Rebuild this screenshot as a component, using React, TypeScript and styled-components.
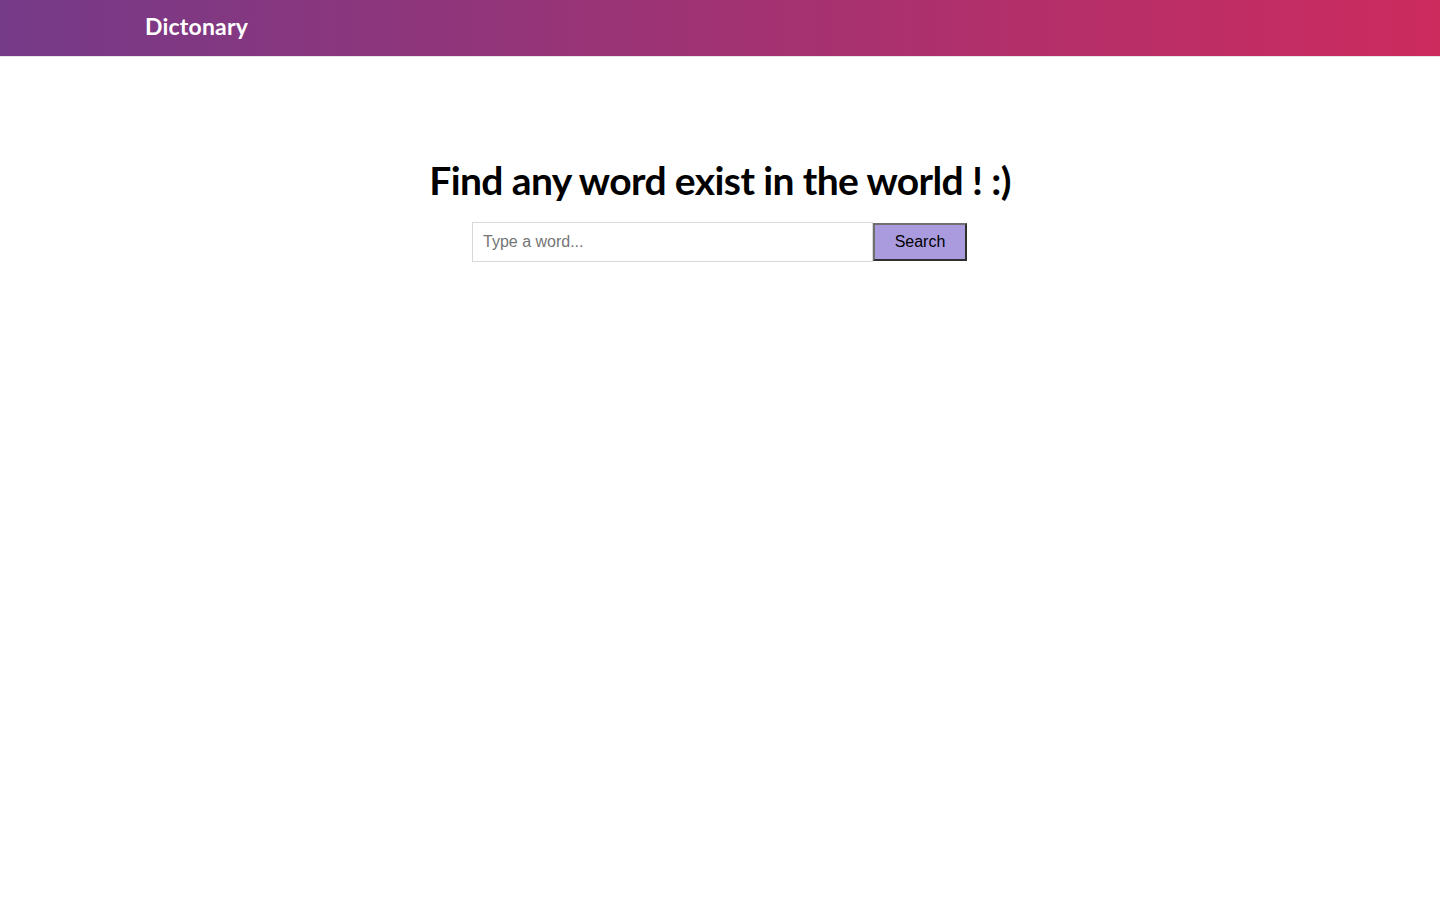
import React from "react";
import styled, { createGlobalStyle } from "styled-components";

const Global = createGlobalStyle`
  html, body { margin: 0; padding: 0; background: #fff; }
  body { font-family: "Liberation Sans", Arial, sans-serif; }
`;

const Header = styled.header`
  height: 57px;
  background: linear-gradient(to right, #753a88, #cc2b5e);
  border-bottom: 1px solid #e6e6e6;
  box-sizing: border-box;
  display: flex;
  align-items: center;
  padding-left: 145px;
`;

const Logo = styled.h1`
  margin: 0;
  color: #fff;
  font-family: Lato, sans-serif;
  font-weight: 700;
  font-size: 23px;
  letter-spacing: 0.2px;
  line-height: 1;
  padding-bottom: 3px;
`;

const Main = styled.main`
  display: flex;
  flex-direction: column;
  align-items: center;
  padding-top: 99px;
`;

const Title = styled.h2`
  margin: 0;
  font-family: Lato, sans-serif;
  font-weight: 700;
  font-size: 39px;
  letter-spacing: -0.6px;
  color: #000;
  line-height: 48px;
`;

const Form = styled.form`
  display: flex;
  margin-top: 18px;
  margin-right: 1px;
`;

const Input = styled.input`
  width: 401px;
  height: 40px;
  box-sizing: border-box;
  border: 1px solid #d9d9d9;
  padding: 0 10px;
  font-family: "Liberation Sans", Arial, sans-serif;
  font-size: 16px;
  outline: none;
  &::placeholder { color: #757575; }
`;

const Button = styled.button`
  width: 94px;
  height: 38px;
  margin-top: 1px;
  box-sizing: border-box;
  background: #aa9bdf;
  border: 2px solid;
  border-color: #6f6f6f #2f2f2f #2f2f2f #6f6f6f;
  font-family: "Liberation Sans", Arial, sans-serif;
  font-size: 16px;
  color: #000;
  cursor: pointer;
`;

export default function App() {
  return (
    <>
      <Global />
      <Header>
        <Logo>Dictonary</Logo>
      </Header>
      <Main>
        <Title>Find any word exist in the world ! :)</Title>
        <Form onSubmit={(e) => e.preventDefault()}>
          <Input placeholder="Type a word..." />
          <Button type="submit">Search</Button>
        </Form>
      </Main>
    </>
  );
}
